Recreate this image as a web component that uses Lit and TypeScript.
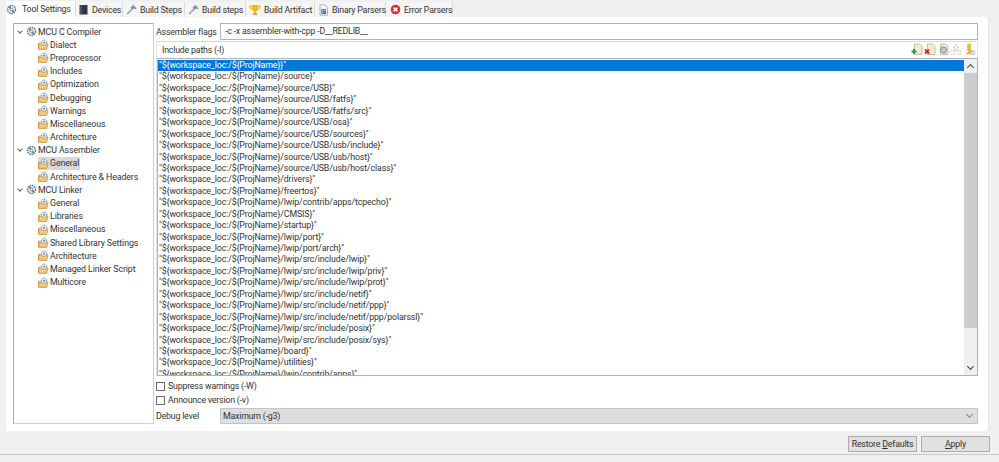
import { css, html, LitElement, svg } from "lit";
import { customElement } from "lit/decorators.js";

const P = "${workspace_loc:/${ProjName}";
const paths = [
  "}",
  "/source}",
  "/source/USB}",
  "/source/USB/fatfs}",
  "/source/USB/fatfs/src}",
  "/source/USB/osa}",
  "/source/USB/sources}",
  "/source/USB/usb/include}",
  "/source/USB/usb/host}",
  "/source/USB/usb/host/class}",
  "/drivers}",
  "/freertos}",
  "/lwip/contrib/apps/tcpecho}",
  "/CMSIS}",
  "/startup}",
  "/lwip/port}",
  "/lwip/port/arch}",
  "/lwip/src/include/lwip}",
  "/lwip/src/include/lwip/priv}",
  "/lwip/src/include/lwip/prot}",
  "/lwip/src/include/netif}",
  "/lwip/src/include/netif/ppp}",
  "/lwip/src/include/netif/ppp/polarssl}",
  "/lwip/src/include/posix}",
  "/lwip/src/include/posix/sys}",
  "/board}",
  "/utilities}",
  "/lwip/contrib/apps}",
];

type Node = { label: string; top?: boolean; selected?: boolean };
const tree: Node[] = [
  { label: "MCU C Compiler", top: true },
  { label: "Dialect" },
  { label: "Preprocessor" },
  { label: "Includes" },
  { label: "Optimization" },
  { label: "Debugging" },
  { label: "Warnings" },
  { label: "Miscellaneous" },
  { label: "Architecture" },
  { label: "MCU Assembler", top: true },
  { label: "General", selected: true },
  { label: "Architecture & Headers" },
  { label: "MCU Linker", top: true },
  { label: "General" },
  { label: "Libraries" },
  { label: "Miscellaneous" },
  { label: "Shared Library Settings" },
  { label: "Architecture" },
  { label: "Managed Linker Script" },
  { label: "Multicore" },
];

const icon = (w: number, h: number, body: unknown) =>
  html`<svg class="ico" width=${w} height=${h} viewBox="0 0 ${w} ${h}">${body}</svg>`;

const gearIcon = () =>
  icon(11, 11, svg`
    <circle cx="5.5" cy="5.5" r="4.1" fill="#dfe6ea" stroke="#5d7689" stroke-width="1.2" stroke-dasharray="1.6 .8"/>
    <path d="M3.2 2.8 7.8 8.2" stroke="#2f7fb0" stroke-width="1.5"/>
    <circle cx="5.5" cy="5.5" r="1.4" fill="#fff" stroke="#58708a" stroke-width=".7"/>`);

const folderIcon = () =>
  icon(11, 11, svg`
    <path d="M.6 5.200h9.400l-1.400 5.200H.6z" fill="#f3c878" stroke="#c98f38" stroke-width=".8"/>
    <path d="M.6 9.500V4.300h1.600V3.400" fill="none" stroke="#c98f38" stroke-width=".8"/>
    <circle cx="6.200" cy="3.700" r="2.700" fill="#e6ebee" stroke="#66798a" stroke-width=".9" stroke-dasharray="1.300 .7"/>
    <circle cx="6.200" cy="3.700" r=".9" fill="#66798a"/>`);

const bookIcon = () =>
  icon(11, 11, svg`
    <rect x="1.500" y="1" width="8" height="9.500" rx=".6" fill="#33363a"/>
    <path d="M3 1v9.500" stroke="#7c8085" stroke-width=".8"/>`);

const hammerIcon = () =>
  icon(11, 11, svg`
    <path d="M1.200 10.200 6 5" stroke="#a5adb5" stroke-width="1.800"/>
    <path d="M4.600 3.200 7.400 1l3.400 3.400-1.500.9-1.400-.9-1.700 1.700z" fill="#7b96b2"/>`);

const trophyIcon = () =>
  icon(12, 12, svg`
    <path d="M3 1h6v3.400C9 6.600 7.600 7.600 6 7.600S3 6.600 3 4.400z" fill="#f2b90f"/>
    <path d="M3 2H.9c0 2.200.9 3.300 2.600 3.500M9 2h2.100c0 2.200-.9 3.300-2.600 3.500" fill="none" stroke="#e4a90c"/>
    <path d="M5.300 7.500h1.400v1.700H8.300v1.500H3.700V9.200h1.600z" fill="#d99e0a"/>`);

const binaryIcon = () =>
  icon(11, 12, svg`
    <path d="M2 .8h5l2.500 2.500v7.900H2z" fill="#f2f4f6" stroke="#9aa3ab" stroke-width=".8"/>
    <rect x="3.300" y="5" width="4.800" height="5" fill="#4c78a8"/>
    <path d="M4 6.200h1M6 6.200h1.400M4 8.200h1.400" stroke="#fff" stroke-width=".8"/>`);

const errorIcon = () =>
  icon(11, 11, svg`
    <circle cx="5.500" cy="5.500" r="4.800" fill="#d9303a"/>
    <path d="M3.600 3.600l3.800 3.800M7.400 3.600 3.600 7.400" stroke="#fff" stroke-width="1.500"/>`);

const pageBase = svg`
  <path d="M3.500 1h5L11 3.500v8H3.500z" fill="#f3ead0" stroke="#b9b08e" stroke-width=".8"/>`;

const toolIcons = [
  icon(12, 12, svg`${pageBase}
    <path d="M.5 8.500h5M3 6v5" stroke="#2f9a3c" stroke-width="2"/>`),
  icon(12, 12, svg`${pageBase}
    <path d="M1 6.500l4 4M5 6.500l-4 4" stroke="#d8232e" stroke-width="1.800"/>`),
  icon(12, 12, svg`${pageBase}
    <circle cx="6.500" cy="7" r="3" fill="#c9d2d9" stroke="#6d8091" stroke-width=".9"/>
    <path d="M5 5.500l3 3" stroke="#e2a52a"/>`),
  icon(12, 12, svg`
    <path d="M6 1 3.200 4.500H5V8h2V4.500h1.800z" fill="#fff" stroke="#bfc4c8" stroke-width=".8"/>
    <path d="M1 7h3.500v4.500H1zM8 7h3v4.500H8z" fill="#f5f5f2" stroke="#d4d4cc" stroke-width=".6"/>`),
  icon(12, 12, svg`
    <path d="M3.500 11l2.800-3.500H4.600V1h2.800v6.500h1.700L6.500 11z" fill="#efbc2c" stroke="#d09a14" stroke-width=".5"/>
    <path d="M8 8h3.500v3.500H8z" fill="#d5e0ec" stroke="#a7b6c6" stroke-width=".6"/>`),
];

const tabs = [
  { label: "Tool Settings", w: 70, gap: 5, pad: 0, ic: gearIcon, active: true },
  { label: "Devices", w: 47, gap: 3, pad: 2, ic: bookIcon },
  { label: "Build Steps", w: 62, gap: 3, pad: 3, ic: hammerIcon },
  { label: "Build steps", w: 61, gap: 3, pad: 3, ic: hammerIcon },
  { label: "Build Artifact", w: 69, gap: 3, pad: 3, ic: trophyIcon },
  { label: "Binary Parsers", w: 71, gap: 3, pad: 3, ic: binaryIcon },
  { label: "Error Parsers", w: 67, gap: 3, pad: 4, ic: errorIcon },
];

@customElement("app-root")
export class AppRoot extends LitElement {
  render() {
    return html`
      <div class="tabs">
        ${tabs.map(
          (t) => html`<div
            class="tab ${t.active ? "active" : ""}"
            style="width:${t.w}px;padding-left:${t.pad}px;gap:${t.gap}px"
          >
            ${t.ic()}<span>${t.label}</span>
          </div>`
        )}
      </div>
      <div class="panel">
        <div class="tree">
          ${tree.map(
            (n) => html`<div class="node ${n.top ? "top" : ""}">
              ${n.top
                ? html`<span class="twisty"></span>${gearIcon()}<span class="lbl">${n.label}</span>`
                : html`<span class="pick ${n.selected ? "sel" : ""}">${folderIcon()}<span class="lbl">${n.label}</span></span>`}
            </div>`
          )}
        </div>
        <div class="main">
          <div class="flags">
            <span class="flags-label">Assembler flags</span>
            <div class="field">-c -x assembler-with-cpp -D__REDLIB__</div>
          </div>
          <div class="group">
            <div class="group-head">
              <span>Include paths (-I)</span>
              <div class="tools">${toolIcons}</div>
            </div>
            <div class="list">
              <div class="rows">
                ${paths.map(
                  (p, i) => html`<div class="row ${i === 0 ? "on" : ""}">"${P}${p}"</div>`
                )}
              </div>
              <div class="scroll">
                <div class="arrow"><span class="chev up"></span></div>
                <div class="track"><div class="thumb"></div></div>
                <div class="arrow"><span class="chev"></span></div>
              </div>
            </div>
          </div>
          <label class="check"><span class="box"></span>Suppress warnings (-W)</label>
          <label class="check second"><span class="box"></span>Announce version (-v)</label>
          <div class="debug">
            <span class="flags-label">Debug level</span>
            <div class="select">
              <span>Maximum (-g3)</span><span class="chev faint"></span>
            </div>
          </div>
        </div>
      </div>
      <div class="footer">
        <div class="btn restore">Restore <u>D</u>efaults</div>
        <div class="btn apply"><u>A</u>pply</div>
      </div>
    `;
  }

  static styles = css`
    :host {
      display: block;
      box-sizing: border-box;
      width: 999px;
      height: 462px;
      overflow: hidden;
      background: #f0f0f0;
      color: #333;
      font-family: Roboto, "Open Sans", sans-serif;
      font-size: 8.8px;
      letter-spacing: -0.2px;
      line-height: 12px;
    }
    .ico {
      flex: none;
      display: block;
    }
    .tabs {
      display: flex;
      align-items: flex-end;
      box-sizing: border-box;
      height: 17px;
      padding-left: 6px;
    }
    .tab {
      display: flex;
      align-items: center;
      box-sizing: border-box;
      height: 15px;
      white-space: nowrap;
      background: #f5f5f5;
      border-right: 1px solid #dcdcdc;
    }
    .tab.active {
      background: #fff;
      height: 16px;
    }
    .panel {
      display: grid;
      grid-template-columns: 141px 1fr;
      column-gap: 2px;
      box-sizing: border-box;
      height: 414px;
      margin: 0 10px 0 6px;
      padding: 6px 10px 7px 7px;
      background: #fff;
      border-right: 1px solid #e4e4e4;
    }
    .tree {
      box-sizing: border-box;
      height: 401px;
      padding: 1px 0 0 4px;
      border: 1px solid #a8a8a8;
      border-right-color: #cfcfcf;
      border-bottom-color: #cfcfcf;
      letter-spacing: -0.1px;
    }
    .node {
      display: flex;
      align-items: center;
      height: 13.200px;
      white-space: nowrap;
    }
    .node.top .ico {
      margin: 0 1px 0 3px;
    }
    .twisty {
      width: 3px;
      height: 3px;
      margin: -2px 1px 0 0;
      border-right: 1px solid #666;
      border-bottom: 1px solid #666;
      transform: rotate(45deg);
    }
    .pick {
      display: flex;
      align-items: center;
      gap: 1px;
      height: 13px;
      margin-left: 20px;
      padding-right: 1px;
    }
    .pick.sel {
      background: #d9d9d9;
    }
    .main {
      display: flex;
      flex-direction: column;
      min-width: 0;
    }
    .flags {
      display: flex;
      align-items: center;
      height: 17px;
      margin-bottom: 1px;
    }
    .flags-label {
      flex: none;
      width: 64px;
      white-space: nowrap;
    }
    .field {
      flex: 1;
      box-sizing: border-box;
      height: 17px;
      padding: 1px 0 0 4px;
      border: 1px solid #b4b4b4;
    }
    .group {
      box-sizing: border-box;
      height: 335px;
      border-top: 1px solid #d8d8d8;
      border-left: 1px solid #e4e4e4;
    }
    .group-head {
      display: flex;
      align-items: center;
      justify-content: space-between;
      box-sizing: border-box;
      height: 16px;
      padding: 0 2px 1px 5px;
      border-right: 1px solid #e4e4e4;
    }
    .tools {
      display: flex;
      gap: 1px;
      margin-top: -1px;
    }
    .list {
      display: flex;
      box-sizing: border-box;
      height: 318px;
      border: 1px solid #b0b0b8;
      overflow: hidden;
    }
    .rows {
      flex: 1;
      min-width: 0;
      padding-top: 1px;
      overflow: hidden;
      letter-spacing: -0.12px;
    }
    .row {
      height: 11.450px;
      line-height: 11.450px;
      padding-left: 1px;
      white-space: nowrap;
    }
    .row.on {
      background: #0078d7;
      color: #fff;
    }
    .scroll {
      flex: none;
      display: flex;
      flex-direction: column;
      width: 13px;
      background: #f0f0f0;
    }
    .arrow {
      flex: none;
      display: flex;
      align-items: center;
      justify-content: center;
      height: 14px;
    }
    .chev {
      width: 4px;
      height: 4px;
      margin-top: -3px;
      border-right: 1px solid #444;
      border-bottom: 1px solid #444;
      transform: rotate(45deg);
    }
    .chev.up {
      margin-top: 3px;
      transform: rotate(225deg);
    }
    .chev.faint {
      border-color: #888;
    }
    .track {
      flex: 1;
    }
    .thumb {
      height: 255px;
      background: #cdcdcd;
    }
    .check {
      display: flex;
      align-items: center;
      gap: 3px;
      height: 10px;
      margin-top: 5px;
    }
    .check.second {
      margin-top: 4px;
    }
    .box {
      box-sizing: border-box;
      width: 9px;
      height: 9px;
      border: 1px solid #6a6a6a;
      background: #fff;
    }
    .debug {
      display: flex;
      align-items: center;
      height: 16px;
      margin-top: 3px;
    }
    .select {
      flex: 1;
      display: flex;
      align-items: center;
      justify-content: space-between;
      box-sizing: border-box;
      height: 16px;
      padding: 0 5px 0 2px;
      background: #dedede;
      border: 1px solid #c4c4c4;
    }
    .footer {
      display: flex;
      justify-content: flex-end;
      gap: 4px;
      box-sizing: border-box;
      height: 24px;
      padding: 5px 9px 0 0;
      border-bottom: 1px solid #c8c8c8;
    }
    .btn {
      box-sizing: border-box;
      width: 69px;
      height: 16px;
      text-align: center;
      line-height: 14px;
      background: #e1e1e1;
      border: 1px solid #adadad;
      white-space: nowrap;
    }
  `;
}

declare global {
  interface HTMLElementTagNameMap {
    "app-root": AppRoot;
  }
}
